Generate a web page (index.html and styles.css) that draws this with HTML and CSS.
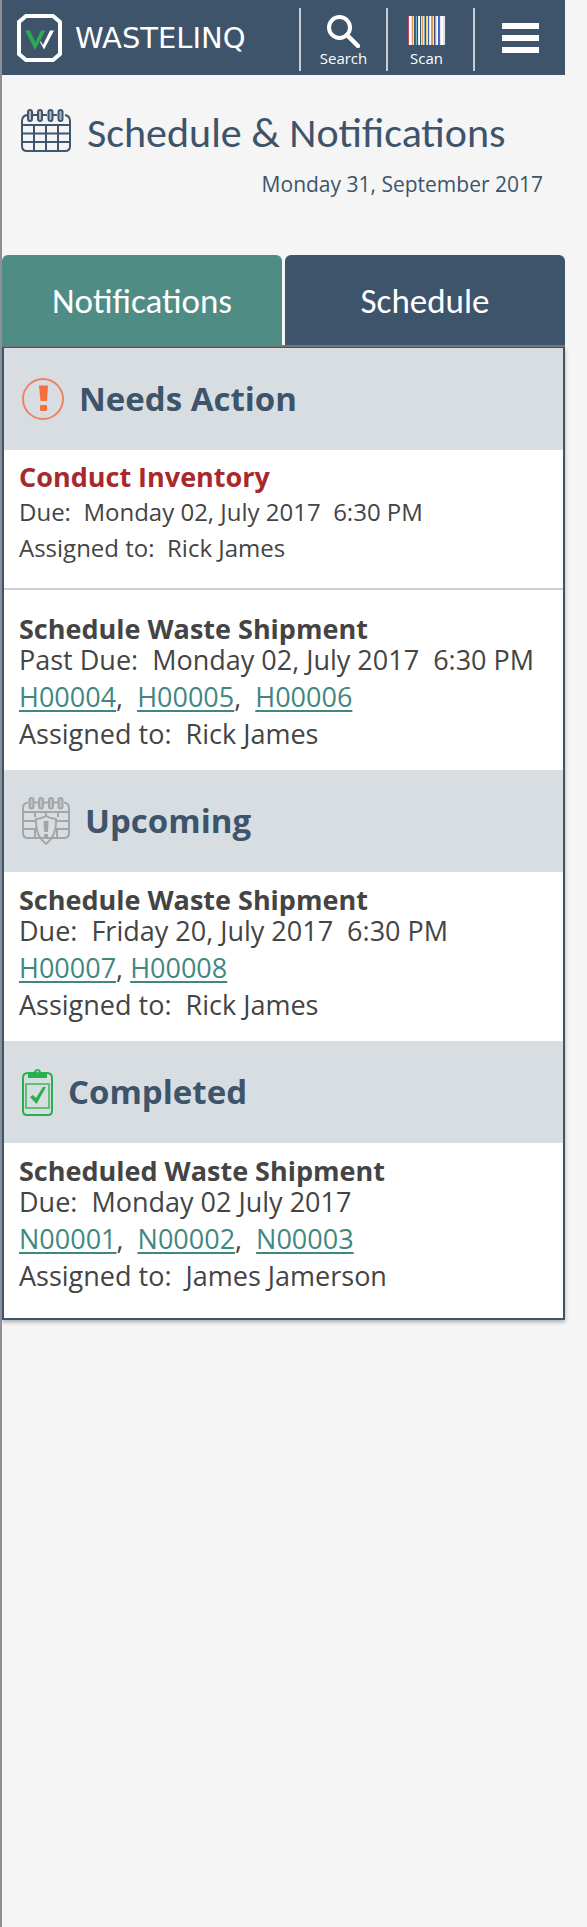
FILE: index.html
```html
<!DOCTYPE html>
<html lang="en">
<head>
<meta charset="utf-8">
<meta name="viewport" content="width=device-width, initial-scale=1">
<title>Schedule &amp; Notifications</title>
<link rel="stylesheet" href="styles.css">
</head>
<body>
<header class="topbar">
  <a class="brand" href="#">
    <svg class="brand-mark" viewBox="0 0 45 48" aria-hidden="true">
      <path d="M9 2H36L43 8V40L36 46H9L2 40V8Z" fill="none" stroke="#fff" stroke-width="4"/>
      <path d="M8 16.500H13L18.500 28L24 16.500H28.500L18 36Z" fill="#2bab4f"/>
      <path d="M23.500 27L26 31L33 16.500H37L27 35.500L23 28Z" fill="#fff"/>
    </svg>
    <span class="brand-name">WASTELINQ</span>
  </a>
  <nav class="actions">
    <button class="action" type="button">
      <svg class="action-icon" viewBox="0 0 33 33" aria-hidden="true"><circle cx="12.500" cy="12.500" r="10.500" fill="none" stroke="#fff" stroke-width="4"/><path d="M20 20L31 31" stroke="#fff" stroke-width="4.500" stroke-linecap="round"/></svg>
      <span>Search</span>
    </button>
    <button class="action action-scan" type="button">
      <svg class="action-icon barcode" viewBox="0 0 38 29" aria-hidden="true">
        <path d="M0 0h38v29H0z" fill="#dfe3e4"/>
        <path d="M0 0h1v29H0zM31 0h1v29h-1z" fill="#c8405e"/>
        <path d="M1 0h2v29H1zM11 0h1v29h-1zM22 0h1v29h-1zM29 0h1v29h-1zM33 0h2v29h-2z" fill="#fff"/>
        <path d="M4 0h1v29H4zM14 0h1v29h-1zM24 0h1v29h-1zM27 0h1v29h-1z" fill="#d89b5c"/>
        <path d="M6 0h1v29H6zM9 0h1v29H9zM12 0h1v29h-1zM17 0h1v29h-1zM26 0h1v29h-1z" fill="#3c536b"/>
        <path d="M8 0h1v29H8zM16 0h1v29h-1zM23 0h1v29h-1z" fill="#6eb3c9"/>
        <path d="M20 0h1v29h-1zM30 0h1v29h-1zM37 0h1v29h-1z" fill="#3b55cf"/>
        <path d="M7 0h1v29H7z" fill="#a33e50"/><path d="M18 0h1v29h-1z" fill="#efc66c"/>
      </svg>
      <span>Scan</span>
    </button>
    <button class="action action-menu" type="button" aria-label="Menu">
      <svg class="menu-icon" viewBox="0 0 37 30" aria-hidden="true"><path d="M0 0h37v6H0zM0 12h37v6H0zM0 24h37v6H0z" fill="#fff"/></svg>
    </button>
  </nav>
</header>

<main>
  <div class="page-head">
    <div class="page-title">
      <svg class="calendar" viewBox="0 0 52 44" aria-hidden="true" fill="none" stroke="#3f566e" stroke-width="2">
        <path d="M7 6Q2 7 2 12V37Q2 42 7 42H45Q50 42 50 37V12Q50 7 45 6M13 6h4M23 6h4M33 6h4M2 16H50M2 24.500H50M2 33H50M14 16V42M26 16V42M38 16V42"/>
        <g fill="#b4bcc5"><rect x="8" y="1" width="4" height="11" rx="2"/><rect x="18" y="1" width="4" height="11" rx="2"/><rect x="28.500" y="1" width="4" height="11" rx="2"/><rect x="38.500" y="1" width="4" height="11" rx="2"/></g>
      </svg>
      <h1>Schedule &amp; Notifications</h1>
    </div>
    <p class="date">Monday 31, September 2017</p>
  </div>

  <div class="tabs" role="tablist">
    <button class="tab tab-active" type="button" role="tab" aria-selected="true">Notifications</button>
    <button class="tab" type="button" role="tab" aria-selected="false">Schedule</button>
  </div>

  <div class="panel" role="tabpanel">
    <section>
      <div class="section-head">
        <svg class="icon-alert" viewBox="0 0 42 42" aria-hidden="true"><circle cx="21" cy="21" r="20" fill="none" stroke="#ee8361" stroke-width="2"/><path d="M17 7.500H26L25 23H18.500Z" fill="#f96e3c"/><rect x="18" y="27" width="7" height="6" rx="1" fill="#f96e3c"/></svg>
        <h2>Needs Action</h2>
      </div>
      <article class="item item-compact">
        <h3 class="urgent">Conduct Inventory</h3>
        <p>Due:&nbsp; Monday 02, July 2017&nbsp; 6:30 PM</p>
        <p>Assigned to:&nbsp; Rick James</p>
      </article>
      <article class="item item-divided">
        <h3>Schedule Waste Shipment</h3>
        <p>Past Due:&nbsp; Monday 02, July 2017&nbsp; 6:30 PM</p>
        <p><a href="#">H00004</a>,&nbsp; <a href="#">H00005</a>,&nbsp; <a href="#">H00006</a></p>
        <p>Assigned to:&nbsp; Rick James</p>
      </article>
    </section>
    <section>
      <div class="section-head">
        <svg class="icon-upcoming" viewBox="0 0 48 48" aria-hidden="true" fill="none" stroke="#a3a6a9" stroke-width="2">
          <path d="M6 5.500Q1 6 1 11V36Q1 41 6 41H42Q47 41 47 36V11Q47 6 42 5.500M12 5.500h4M22 5.500h4M32 5.500h4M1 15H47M1 24H13M35 24H47M1 32H15M33 32H47M13 15V20M24 15V19M36 15V20M13 32V41M35 32V41"/>
          <path d="M24 19Q19 22 14 22Q13 39 24 47Q35 39 34 22Q29 22 24 19Z"/>
          <path d="M21.500 24H26.500L26 35H22ZM22 37H26V41H22Z" fill="#a3a6a9" stroke="none"/>
          <g fill="#bfc3c6"><rect x="7.500" y="1" width="4" height="10.500" rx="2"/><rect x="17" y="1" width="4" height="10.500" rx="2"/><rect x="27" y="1" width="4" height="10.500" rx="2"/><rect x="36.500" y="1" width="4" height="10.500" rx="2"/></g>
        </svg>
        <h2>Upcoming</h2>
      </div>
      <article class="item">
        <h3>Schedule Waste Shipment</h3>
        <p>Due:&nbsp; Friday 20, July 2017&nbsp; 6:30 PM</p>
        <p><a href="#">H00007</a>, <a href="#">H00008</a></p>
        <p>Assigned to:&nbsp; Rick James</p>
      </article>
    </section>
    <section>
      <div class="section-head">
        <svg class="icon-done" viewBox="0 0 31 47" aria-hidden="true" fill="none" stroke="#27b04e">
          <path d="M6 4Q1 4 1 9V42Q1 46 5 46H26Q30 46 30 42V9Q30 4 25 4" stroke-width="2"/>
          <rect x="4" y="15" width="23" height="24" stroke="#5fc07a" stroke-width="2"/>
          <path d="M6 3H12Q13 0 15.500 0Q18 0 19 3H25V9H6Z" fill="#27b04e" stroke="none"/>
          <circle cx="15.500" cy="2.500" r="1" fill="#d8dde1" stroke="none"/>
          <path d="M8 28L11 26L14 29L21 18H24L14.500 35Z" fill="#27b04e" stroke="none"/>
        </svg>
        <h2>Completed</h2>
      </div>
      <article class="item item-last">
        <h3>Scheduled Waste Shipment</h3>
        <p>Due:&nbsp; Monday 02 July 2017</p>
        <p><a href="#">N00001</a>,&nbsp; <a href="#">N00002</a>,&nbsp; <a href="#">N00003</a></p>
        <p>Assigned to:&nbsp; James Jamerson</p>
      </article>
    </section>
  </div>
</main>
</body>
</html>
```

FILE: styles.css
```css
* { box-sizing: border-box; }
h1, h2, h3, p { margin: 0; }
svg { display: block; flex: none; }
button { border: 0; padding: 0; cursor: pointer; font: inherit; color: #fff; }

body {
  margin: 0;
  min-height: 100vh;
  padding-right: 22px;
  border-left: 2px solid #8a8f98;
  background: #f5f5f5;
  color: #444;
  font-family: "Open Sans", "Noto Sans", sans-serif;
}

.topbar {
  display: flex;
  justify-content: space-between;
  height: 75px;
  background: #3d546b;
}
.brand {
  display: flex;
  align-items: center;
  gap: 13px;
  padding-left: 15px;
  color: #fff;
  text-decoration: none;
}
.brand-mark { width: 45px; height: 48px; }
.brand-name { font: 29px/32px "DejaVu Sans", sans-serif; }

.actions { display: flex; padding: 8px 0 4px; }
.action {
  display: flex;
  flex-direction: column;
  align-items: center;
  width: 87px;
  padding-top: 7px;
  border-left: 2px solid #c9ced4;
  background: transparent;
  font-size: 15px;
  line-height: 20px;
}
.action-icon { width: 33px; height: 33px; }
.action-scan { padding-right: 8px; }
.barcode { width: 38px; height: 29px; margin: 1px 0 3px; }
.action-menu { width: 92px; padding-top: 15px; }
.menu-icon { width: 37px; height: 30px; }

.page-head { padding: 32px 22px 45px 18px; }
.page-title { display: flex; gap: 15px; }
.calendar { width: 52px; height: 44px; margin-top: 2px; }
h1 {
  color: #3d546b;
  font: 400 42px/52px Carlito, Calibri, Lato, sans-serif;
  white-space: nowrap;
}
.date {
  color: #3d546b;
  font-size: 21px;
  line-height: 51px;
  text-align: right;
}

.tabs {
  display: grid;
  grid-template-columns: 1fr 1fr;
  gap: 3px;
  border-bottom: 2px solid #777a7d;
}
.tab {
  height: 90px;
  padding-top: 2px;
  border-radius: 6px 6px 0 0;
  background: #3d546b;
  font: 300 35px/44px Carlito, Calibri, Lato, sans-serif;
}
.tab-active { background: #4e8c84; }

.panel {
  border: 2px solid #3d546b;
  border-top-width: 1px;
  background: #fff;
  box-shadow: 0 2px 4px rgba(0, 0, 0, 0.3);
}
.section-head {
  display: flex;
  align-items: center;
  gap: 15px;
  height: 102px;
  padding: 0 18px;
  background: #d8dde1;
}
h2 {
  color: #3d546b;
  font-size: 33px;
  line-height: 44px;
}
.icon-alert { width: 42px; height: 42px; }
.icon-upcoming { width: 48px; height: 48px; }
.icon-done { width: 31px; height: 47px; }

.item {
  padding: 16px 15px 18px;
  font-size: 27px;
  line-height: 37px;
}
.item h3 { font-size: 27px; font-weight: 700; line-height: 24px; }
.item .urgent { margin-bottom: 5px; color: #a8282e; }
.item a { color: #42877f; text-underline-offset: 3px; text-decoration-thickness: 2px; }
.item-compact { padding: 15px 15px 22px; font-size: 24px; line-height: 36px; }
.item-divided { padding-top: 27px; border-top: 2px solid #c9d0d8; }
.item-last { padding-bottom: 24px; }
```
